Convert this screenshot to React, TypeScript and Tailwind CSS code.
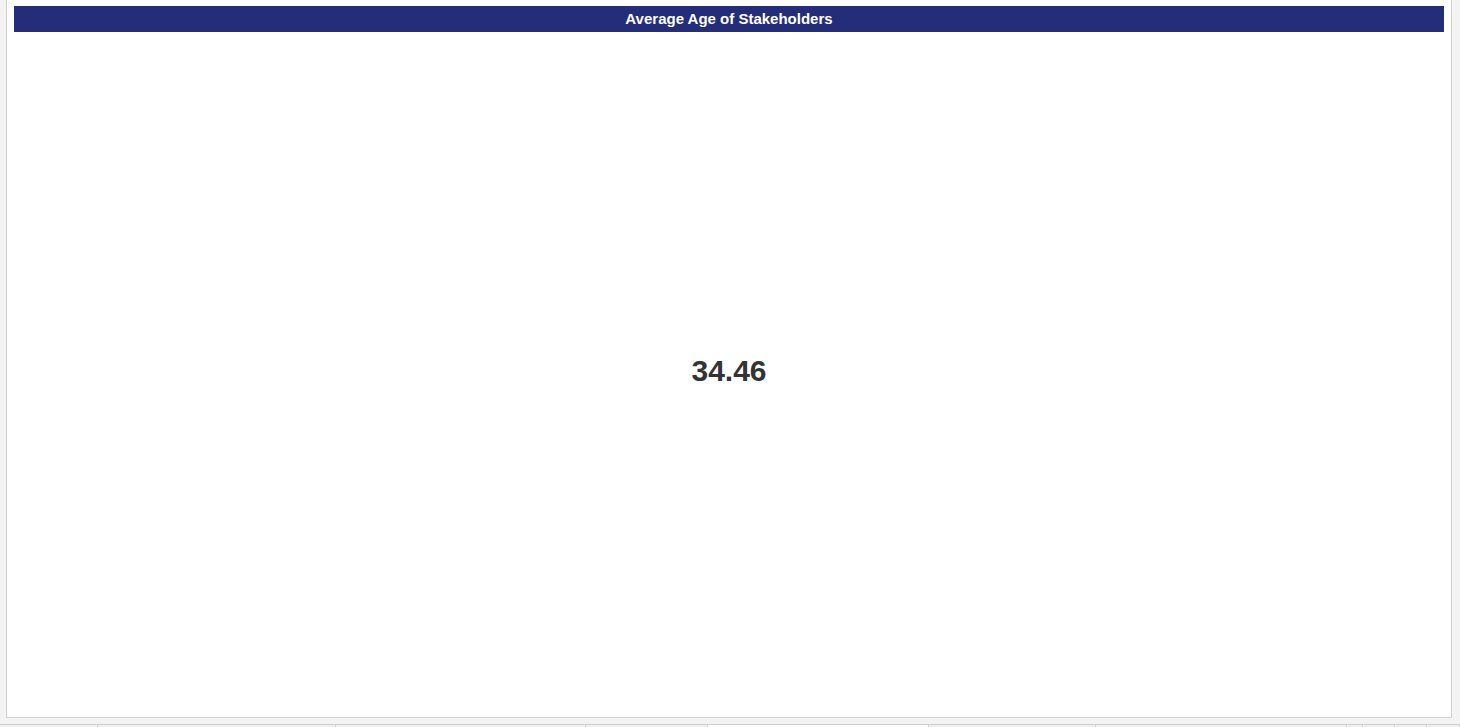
import React from "react";

const tabs = [
  { w: 98, active: false },
  { w: 238, active: false },
  { w: 250, active: false },
  { w: 122, active: false },
  { w: 221, active: true },
  { w: 167, active: false },
  { w: 251, active: false },
  { w: 16, active: false },
  { w: 32, active: false },
  { w: 32, active: false },
  { w: 33, active: false },
];

export default function App() {
  return (
    <div
      className="w-[1460px] h-[727px] bg-[#f3f3f3] flex flex-col overflow-hidden"
      style={{ fontFamily: '"Liberation Sans", Arial, sans-serif' }}
    >
      <div className="pl-[6px] pr-[8px] shrink-0">
        <div className="h-[718px] bg-white border-x border-b border-[#d3d3d3] flex flex-col">
          <div className="mx-[7px] mt-[6px] h-[26px] pb-[2px] bg-[#242d78] flex items-center justify-center">
            <span className="text-white text-[15px] font-bold leading-none">
              Average Age of Stakeholders
            </span>
          </div>
          <div className="flex-1 flex items-center justify-center pb-[8px]">
            <span className="text-[#333333] text-[30px] font-bold leading-none">
              34.46
            </span>
          </div>
        </div>
      </div>
      <div className="h-[6px] shrink-0" />
      <div className="flex flex-1 border-t border-[#cfcfcf]">
        {tabs.map((t, i) => (
          <div
            key={i}
            className={
              (t.active ? "bg-white " : "bg-[#f0f0f0] ") +
              "h-full shrink-0 border-r border-[#cfcfcf]"
            }
            style={{ width: t.w }}
          />
        ))}
      </div>
    </div>
  );
}
